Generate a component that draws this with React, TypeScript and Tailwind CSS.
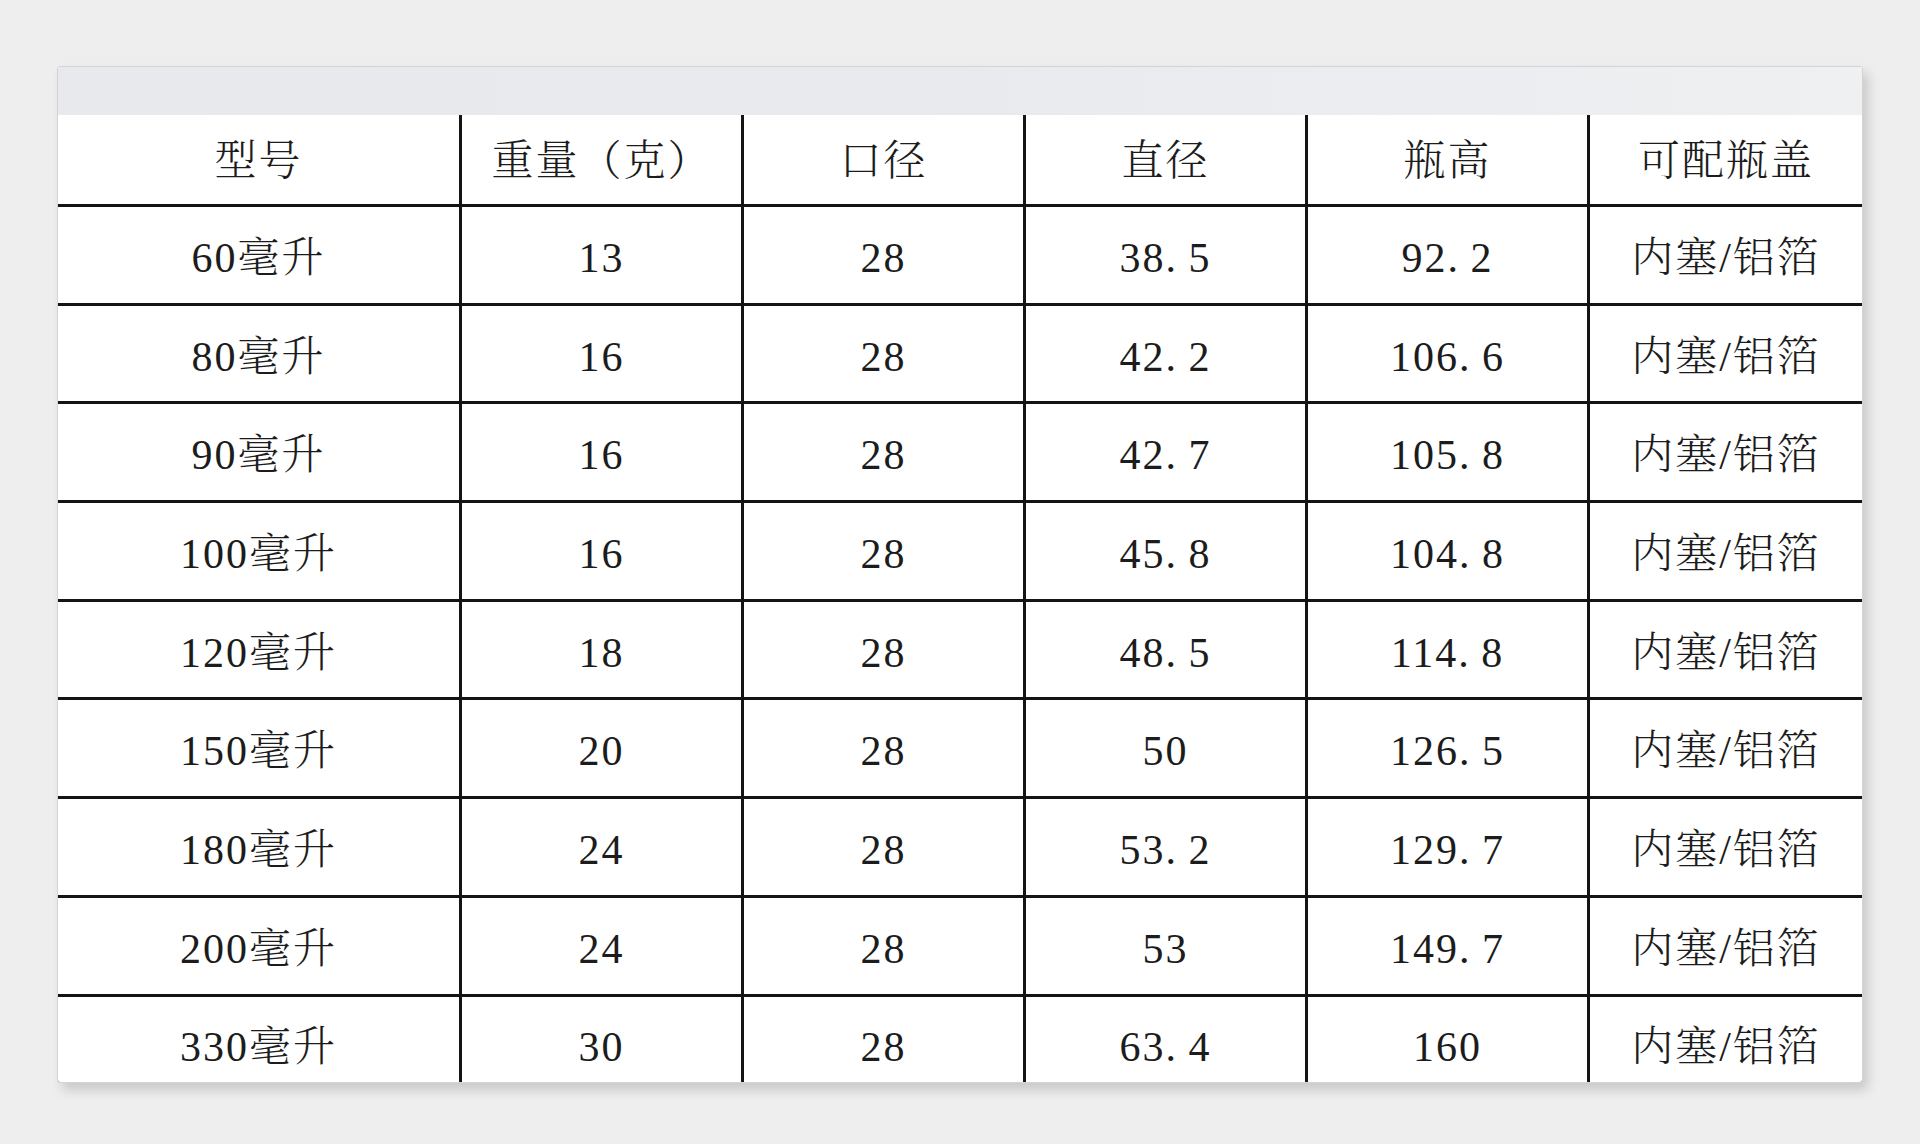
import React from "react";

const header = ["型号", "重量（克）", "口径", "直径", "瓶高", "可配瓶盖"];

const rows: string[][] = [
  ["60毫升", "13", "28", "38.5", "92.2", "内塞/铝箔"],
  ["80毫升", "16", "28", "42.2", "106.6", "内塞/铝箔"],
  ["90毫升", "16", "28", "42.7", "105.8", "内塞/铝箔"],
  ["100毫升", "16", "28", "45.8", "104.8", "内塞/铝箔"],
  ["120毫升", "18", "28", "48.5", "114.8", "内塞/铝箔"],
  ["150毫升", "20", "28", "50", "126.5", "内塞/铝箔"],
  ["180毫升", "24", "28", "53.2", "129.7", "内塞/铝箔"],
  ["200毫升", "24", "28", "53", "149.7", "内塞/铝箔"],
  ["330毫升", "30", "28", "63.4", "160", "内塞/铝箔"],
];

function CellText({ text }: { text: string }) {
  const parts = text.split(".");
  return (
    <span className="whitespace-nowrap">
      {parts.map((p, i) => (
        <React.Fragment key={i}>
          {i > 0 && <span className="inline-block w-[23px] text-left">.</span>}
          {p}
        </React.Fragment>
      ))}
    </span>
  );
}

export default function App() {
  return (
    <div
      className="w-[1920px] h-[1144px] bg-[#eeeeee] pt-[66px] pl-[57px] overflow-hidden"
      style={{ fontFamily: '"Liberation Serif", "Noto Serif CJK SC", "Noto Sans CJK SC", serif' }}
    >
      <div className="w-[1806px] h-[1017px] bg-white border border-[#d4d4d4] rounded-[3px] overflow-hidden shadow-[5px_7px_12px_rgba(0,0,0,0.16)] flex flex-col">
        <div className="h-[48px] shrink-0 bg-gradient-to-r from-[#e8e9ed] via-[#e9eaee] to-[#eef0f2]" />
        <div className="grid grid-cols-[401px_279px_279px_279px_279px_1fr] grid-rows-[89px_repeat(9,95.7px)] gap-[3px] bg-[#141414] text-[#1c1c1c] text-[42px] leading-none tracking-[2px] font-light">
          {header.map((h, i) => (
            <div key={"h" + i} className="bg-white flex items-center justify-center pt-[2px]">
              <CellText text={h} />
            </div>
          ))}
          {rows.map((r, ri) =>
            r.map((c, ci) => (
              <div key={ri + "-" + ci} className="bg-white flex items-center justify-center pt-[6px]">
                <CellText text={c} />
              </div>
            ))
          )}
        </div>
      </div>
    </div>
  );
}
